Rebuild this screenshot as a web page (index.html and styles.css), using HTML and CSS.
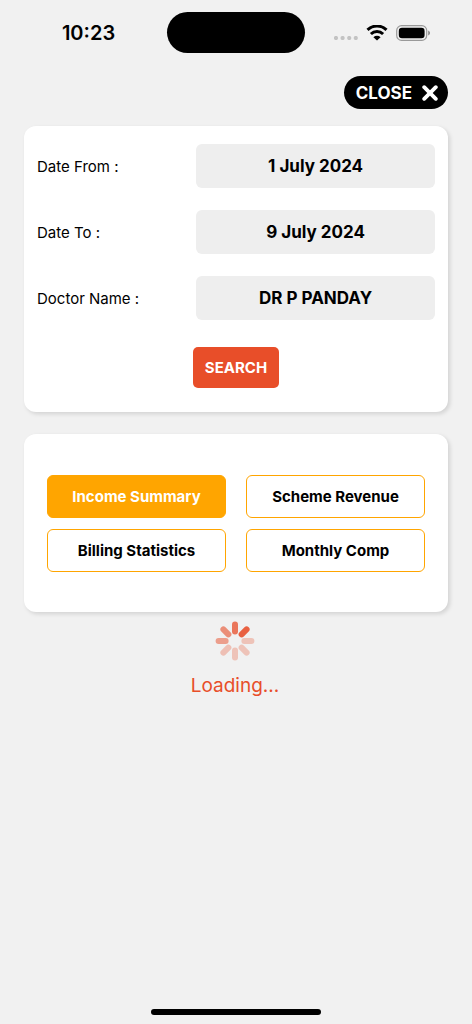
FILE: index.html
```html
<!DOCTYPE html>
<html lang="en">
<head>
<meta charset="utf-8">
<meta name="viewport" content="width=device-width, initial-scale=1">
<title>Income Summary</title>
<link rel="stylesheet" href="styles.css">
</head>
<body>
<div class="screen">
  <header class="status-bar">
    <time class="clock">10:23</time>
    <div class="island"></div>
    <div class="indicators">
      <svg class="dots" width="24" height="4" viewBox="0 0 24 4" fill="#c3c3c3" aria-hidden="true">
        <circle cx="2" cy="2" r="2.1"/><circle cx="8.6" cy="2" r="2.1"/><circle cx="15.2" cy="2" r="2.1"/><circle cx="21.8" cy="2" r="2.1"/>
      </svg>
      <svg class="wifi" width="22" height="16" viewBox="0 0 22 16" aria-hidden="true">
        <g fill="none" stroke="#000" stroke-width="3">
          <path d="M1.5 4.900a13.600 13.600 0 0 1 19 0"/>
          <path d="M4.900 9a8.800 8.800 0 0 1 12.200 0"/>
        </g>
        <path d="M11 15.600 7.400 12.200a5.200 5.200 0 0 1 7.200 0z"/>
      </svg>
      <svg class="battery" width="35" height="16" viewBox="0 0 35 16" aria-hidden="true">
        <rect x=".7" y=".7" width="30" height="14.600" rx="4.800" fill="none" stroke="#999" stroke-width="1.200"/>
        <rect x="2.800" y="2.700" width="25.800" height="10.600" rx="3.200"/>
        <path d="M32.200 5.500v5c1-.4 1.800-1.400 1.800-2.500s-.8-2.100-1.800-2.500z" fill="#888"/>
      </svg>
    </div>
  </header>

  <main class="content">
    <button class="close" type="button">CLOSE
      <svg width="16" height="16" viewBox="0 0 16 16" fill="none" stroke="#fff" stroke-width="3.800" stroke-linecap="round" aria-hidden="true"><path d="m2.200 2.200 11.600 11.600M13.800 2.200 2.200 13.800"/></svg>
    </button>

    <form class="card filters">
      <div class="field">
        <label for="from">Date From :</label>
        <button class="value" id="from" type="button">1 July 2024</button>
      </div>
      <div class="field">
        <label for="to">Date To :</label>
        <button class="value" id="to" type="button">9 July 2024</button>
      </div>
      <div class="field">
        <label for="doctor">Doctor Name :</label>
        <button class="value" id="doctor" type="button">DR P PANDAY</button>
      </div>
      <button class="search" type="button">SEARCH</button>
    </form>

    <nav class="card reports">
      <button class="report active" type="button">Income Summary</button>
      <button class="report" type="button">Scheme Revenue</button>
      <button class="report" type="button">Billing Statistics</button>
      <button class="report" type="button">Monthly Comp</button>
    </nav>

    <div class="loading" role="status">
      <svg width="40" height="40" viewBox="-20 -20 40 40" stroke="#e84e29" stroke-width="6" stroke-linecap="round" aria-hidden="true">
        <path d="M0-9.400v-7" opacity=".75"/>
        <path d="M0-9.400v-7" transform="rotate(45)" opacity=".88"/>
        <path d="M0-9.400v-7" transform="rotate(90)" opacity=".28"/>
        <path d="M0-9.400v-7" transform="rotate(135)" opacity=".28"/>
        <path d="M0-9.400v-7" transform="rotate(180)" opacity=".28"/>
        <path d="M0-9.400v-7" transform="rotate(225)" opacity=".3"/>
        <path d="M0-9.400v-7" transform="rotate(270)" opacity=".5"/>
        <path d="M0-9.400v-7" transform="rotate(315)" opacity=".6"/>
      </svg>
      <p>Loading...</p>
    </div>
  </main>
  <div class="home-indicator"></div>
</div>
</body>
</html>
```

FILE: styles.css
```css
* {
  box-sizing: border-box;
}

body {
  margin: 0;
  background: #f1f1f1;
  color: #000;
  font-family: Inter, "Liberation Sans", sans-serif;
  font-size: 15px;
}

button {
  margin: 0;
  border: 0;
  padding: 0;
  font: inherit;
  color: inherit;
  cursor: pointer;
}

.screen {
  display: flex;
  flex-direction: column;
  min-height: 100vh;
}

.status-bar {
  display: grid;
  grid-template-columns: 1fr 138px 1fr;
  align-items: center;
  padding-top: 12px;
}

.clock {
  justify-self: center;
  padding-left: 10px;
  font-size: 20px;
  font-weight: 600;
}

.island {
  height: 41px;
  border-radius: 21px;
  background: #000;
}

.indicators {
  display: flex;
  justify-content: center;
  align-items: center;
  gap: 8px;
  padding-right: 12px;
}

.dots {
  margin-top: 10px;
}

.content {
  display: flex;
  flex-direction: column;
  flex: 1;
  padding: 23px 24px;
}

.close {
  display: flex;
  align-self: flex-end;
  align-items: center;
  gap: 10px;
  height: 33px;
  margin-bottom: 17px;
  padding: 0 10px 0 12px;
  border-radius: 17px;
  background: #000;
  color: #fff;
  font-size: 17px;
  font-weight: 700;
}

.card {
  border-radius: 12px;
  background: #fff;
  box-shadow: 2px 2px 4px rgba(0, 0, 0, 0.13);
}

.filters {
  display: flex;
  flex-direction: column;
  gap: 22px;
  padding: 18px 13px 24px;
}

.field {
  display: grid;
  grid-template-columns: 2fr 3fr;
  align-items: center;
}

.value {
  height: 44px;
  border-radius: 6px;
  background: #eee;
  font-size: 17px;
  font-weight: 700;
}

.search {
  align-self: center;
  height: 41px;
  margin-top: 5px;
  padding: 0 12px;
  border-radius: 5px;
  background: #e84e29;
  color: #fff;
  font-weight: 700;
}

.reports {
  display: grid;
  grid-template-columns: 1fr 1fr;
  gap: 11px 20px;
  margin-top: 22px;
  padding: 41px 23px 40px;
}

.report {
  height: 43px;
  border: 1px solid #ffa500;
  border-radius: 6px;
  background: #fff;
  font-weight: 700;
}

.report.active {
  background: #ffa500;
  color: #fff;
}

.loading {
  display: flex;
  flex-direction: column;
  align-items: center;
  gap: 13px;
  padding: 9px 2px 0 0;
  color: #e84e29;
}

.loading p {
  margin: 0;
  font-size: 19px;
  line-height: 24px;
}

.home-indicator {
  width: 36%;
  height: 6px;
  margin: 0 auto 9px;
  border-radius: 3px;
  background: #000;
}
```
